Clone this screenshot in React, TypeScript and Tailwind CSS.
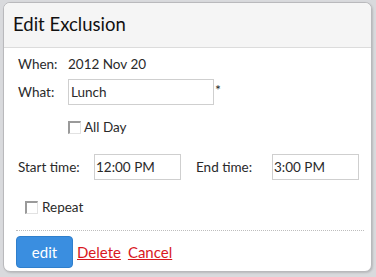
import React from "react";

function Check() {
  return (
    <span className="inline-block w-[13px] h-[13px] box-border border-t-[2px] border-l-[2px] border-t-[#9a9a9a] border-l-[#9a9a9a] border-b border-r border-b-[#e2e2e2] border-r-[#e2e2e2] bg-white" />
  );
}

export default function App() {
  return (
    <div
      className="w-[376px] h-[277px] bg-[#d9dadd] overflow-hidden pt-[2px] pl-[3px]"
      style={{ fontFamily: "Lato, 'Open Sans', sans-serif" }}
    >
      <div className="w-[369px] h-[270px] bg-white border border-[#b9b9bc] rounded-[7px] overflow-hidden text-[#2a2a2a] shadow-[1px_1px_2px_rgba(0,0,0,0.15)]">
        <div className="h-[45px] bg-[#f5f5f5] border-b border-[#dcdcdc] flex items-center pl-[9px]">
          <span className="text-[18.5px] text-[#111]">Edit Exclusion</span>
        </div>
        <div className="pl-[14px] flex flex-col text-[13.5px]">
          <div className="mt-[7px] h-[18px] flex items-center">
            <span className="w-[50px]">When:</span>
            <span>2012 Nov 20</span>
          </div>
          <div className="mt-[6px] h-[26px] flex items-center">
            <span className="w-[50px]">What:</span>
            <div className="w-[146px] h-[26px] border border-[#cfcfcf] flex items-center pl-[2px]">Lunch</div>
            <span className="ml-[1px] -mt-[6px] text-[14px]">*</span>
          </div>
          <div className="mt-[13px] h-[18px] flex items-center ml-[50px] gap-[3px]">
            <Check />
            <span>All Day</span>
          </div>
          <div className="mt-[18px] h-[26px] flex items-center">
            <span className="w-[76px]">Start time:</span>
            <div className="w-[87px] h-[26px] border border-[#cfcfcf] flex items-center pl-[1px]">12:00 PM</div>
            <span className="ml-[15px] w-[76px]">End time:</span>
            <div className="w-[87px] h-[26px] border border-[#cfcfcf] flex items-center pl-[1px]">3:00 PM</div>
          </div>
          <div className="mt-[18px] h-[18px] flex items-center ml-[7px] gap-[4px]">
            <Check />
            <span>Repeat</span>
          </div>
          <div className="mt-[14px] -ml-[2px] w-[348px] border-t border-dotted border-[#bdbdbd]" />
          <div className="mt-[5px] -ml-[2px] flex items-center">
            <button className="w-[57px] h-[32px] rounded-[4px] bg-[#3a8ee0] text-white text-[15px] border border-[#2f7fcc]">edit</button>
            <a className="ml-[4px] text-[15px] text-[#d9181e] underline">Delete</a>
            <a className="ml-[7px] text-[15px] text-[#d9181e] underline">Cancel</a>
          </div>
        </div>
      </div>
    </div>
  );
}
